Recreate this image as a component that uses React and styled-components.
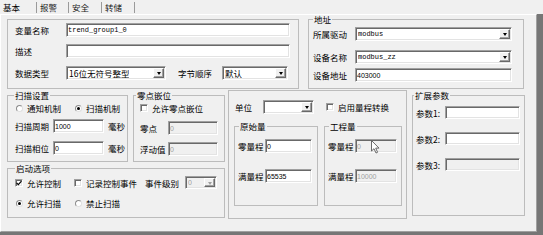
import styled, { createGlobalStyle } from "styled-components"

//Styles globaux
const GlobalStyle = createGlobalStyle`
  * {
    box-sizing: border-box;
  }
  html,
  body {
    margin: 0;
    padding: 0;
    background: #f0f0f0;
  }
  body {
    font-family: "Noto Sans CJK SC", "Liberation Sans", sans-serif;
    font-size: 8.5px;
    color: #000;
  }
`

const Window = styled.div`
  width: 543px;
  height: 235px;
  display: flex;
  flex-direction: column;
  background: #f0f0f0;
  overflow: hidden;
`

const TabBar = styled.div`
  display: flex;
  height: 14px;
  flex: none;
`

const Tab = styled.div`
  width: ${(p) => p.$w}px;
  height: 11px;
  margin-top: 2px;
  padding-left: 3px;
  border-right: 1px solid #9a9a9a;
  line-height: 11px;
  white-space: nowrap;
  color: ${(p) => (p.$active ? "#000" : "#1a1a1a")};
`

const Frame = styled.div`
  flex: 1;
  display: flex;
  border-right: 6px solid #767676;
  border-bottom: 3px solid #767676;
`

const Panel = styled.div`
  flex: 1;
  display: flex;
  flex-direction: column;
  border-top: 1px solid #fff;
  border-left: 1px solid #fff;
  border-right: 1px solid #a0a0a0;
  border-bottom: 1px solid #a0a0a0;
  padding-left: 6px;
`

const TopRow = styled.div`
  display: flex;
  align-items: flex-start;
`

const BottomRow = styled.div`
  display: flex;
  align-items: flex-start;
`

const LeftCol = styled.div`
  display: flex;
  flex-direction: column;
  margin-top: 2px;
`

const PairRow = styled.div`
  display: flex;
  gap: 5px;
`

const InnerRow = styled.div`
  display: flex;
  gap: 6px;
  margin-top: 8px;
`

const Group = styled.fieldset`
  flex: none;
  display: flex;
  flex-direction: column;
  min-width: 0;
  width: ${(p) => p.$w}px;
  height: ${(p) => p.$h}px;
  margin: ${(p) => p.$m || "0"};
  padding: ${(p) => p.$pad || "0"};
  border: 1px solid #bcbcbc;
`

const Legend = styled.legend`
  height: 8px;
  line-height: 8px;
  padding: 0 1px;
  margin-left: ${(p) => p.$ml || 0}px;
  white-space: nowrap;
`

const Row = styled.div`
  flex: none;
  display: flex;
  align-items: center;
  height: ${(p) => p.$h || 14}px;
  margin-top: ${(p) => p.$mt || 0}px;
`

const Label = styled.span`
  flex: none;
  width: ${(p) => (p.$w ? `${p.$w}px` : "auto")};
  margin-left: ${(p) => p.$ml || 0}px;
  line-height: 12px;
  white-space: nowrap;
`

const sunken = `
  border: 1px solid;
  border-color: #a0a0a0 #fff #fff #a0a0a0;
  box-shadow: inset 1px 1px 0 #696969, inset -1px -1px 0 #e3e3e3;
`

const TextBox = styled.input`
  flex: none;
  width: ${(p) => p.$w}px;
  height: ${(p) => p.$h || 14}px;
  margin: 0;
  padding: 0 1px;
  ${sunken}
  background: #fff;
  font-family: ${(p) =>
    p.$mono ? `"Liberation Mono", monospace` : `"Liberation Sans", sans-serif`};
  font-size: 7px;
  color: #000;
  outline: none;

  &:disabled {
    background: #f0f0f0;
    color: #a0a0a0;
  }
`

const ComboFrame = styled.div`
  flex: none;
  display: flex;
  align-items: center;
  justify-content: space-between;
  width: ${(p) => p.$w}px;
  height: ${(p) => p.$h}px;
  padding: 0 1px 0 2px;
  ${sunken}
  background: ${(p) => (p.$disabled ? "#f0f0f0" : "#fff")};
`

const ComboValue = styled.span`
  white-space: nowrap;
  overflow: hidden;
  line-height: 10px;
  color: ${(p) => (p.$disabled ? "#a0a0a0" : "#000")};
  font-family: ${(p) =>
    p.$mono
      ? `"Liberation Mono", monospace`
      : p.$cjk
      ? `"Noto Sans CJK SC", sans-serif`
      : `"Liberation Sans", sans-serif`};
  font-size: ${(p) => (p.$cjk ? "8.5px" : "7px")};
`

const DropButton = styled.span`
  flex: none;
  display: flex;
  align-items: center;
  justify-content: center;
  width: 11px;
  height: ${(p) => p.$h}px;
  background: #f0f0f0;
  border: 1px solid;
  border-color: #fff #696969 #696969 #fff;
  box-shadow: inset -1px -1px 0 #a0a0a0;

  &::after {
    content: "";
    margin-top: 1px;
    border-left: 2.5px solid transparent;
    border-right: 2.5px solid transparent;
    border-top: 3px solid ${(p) => (p.$disabled ? "#a0a0a0" : "#000")};
  }
`

const Option = styled.span`
  flex: none;
  display: flex;
  align-items: center;
  gap: 4px;
  width: ${(p) => (p.$w ? `${p.$w}px` : "auto")};
  margin-left: ${(p) => p.$ml || 0}px;
  line-height: 12px;
  white-space: nowrap;
`

const CheckBox = styled.span`
  flex: none;
  display: flex;
  align-items: center;
  justify-content: center;
  width: 8px;
  height: 8px;
  ${sunken}
  background: #fff;
`

const Radio = styled.span`
  flex: none;
  display: flex;
  align-items: center;
  justify-content: center;
  width: 7px;
  height: 7px;
  border-radius: 50%;
  border: 1px solid #8c8c8c;
  border-right-color: #e0e0e0;
  border-bottom-color: #e0e0e0;
  background: #fff;

  &::after {
    content: "";
    display: ${(p) => (p.$on ? "block" : "none")};
    width: 3px;
    height: 3px;
    border-radius: 50%;
    background: #000;
  }
`

const FieldWrap = styled.span`
  position: relative;
  display: flex;
`

const Pointer = styled.svg`
  position: absolute;
  left: 16px;
  top: 1px;
  pointer-events: none;
`

function Check({ on }) {
  return (
    <CheckBox>
      {on && (
        <svg width="6" height="6" viewBox="0 0 6 6">
          <path d="M0.6 2.8 L2.3 4.6 L5.5 1.1" fill="none" stroke="#000" strokeWidth="1.2" />
        </svg>
      )}
    </CheckBox>
  )
}

function ComboBox({ w, h = 14, value, mono, cjk, disabled }) {
  return (
    <ComboFrame $w={w} $h={h} $disabled={disabled}>
      <ComboValue $mono={mono} $cjk={cjk} $disabled={disabled}>
        {value}
      </ComboValue>
      <DropButton $h={h - 4} $disabled={disabled} />
    </ComboFrame>
  )
}

function App() {
  return (
    <>
      <GlobalStyle />
      <Window>
        <TabBar>
          <Tab $w={37} $active>
            基本
          </Tab>
          <Tab $w={32}>报警</Tab>
          <Tab $w={33}>安全</Tab>
          <Tab $w={33}>转储</Tab>
        </TabBar>
        <Frame>
          <Panel>
            {/* Variable et adresse */}
            <TopRow>
              <Group $w={292} $h={70} $m="4px 0 0" $pad="3px 7px 0">
                <Row>
                  <Label $w={51}>变量名称</Label>
                  <TextBox $w={224} $mono defaultValue="trend_group1_0" readOnly />
                </Row>
                <Row $mt={7}>
                  <Label $w={51}>描述</Label>
                  <TextBox $w={224} readOnly />
                </Row>
                <Row $mt={8}>
                  <Label $w={51}>数据类型</Label>
                  <ComboBox w={100} value="16位无符号整型" cjk />
                  <Label $w={44} $ml={12}>
                    字节顺序
                  </Label>
                  <ComboBox w={66} value="默认" cjk />
                </Row>
              </Group>
              <Group $w={216} $h={74} $m="0 0 0 9px" $pad="4px 4px 0">
                <Legend>地址</Legend>
                <Row>
                  <Label $w={42}>所属驱动</Label>
                  <ComboBox w={157} value="modbus" mono />
                </Row>
                <Row $mt={9}>
                  <Label $w={42}>设备名称</Label>
                  <ComboBox w={157} value="modbus_zz" mono />
                </Row>
                <Row $mt={4}>
                  <Label $w={42}>设备地址</Label>
                  <TextBox $w={157} defaultValue="403000" readOnly />
                </Row>
              </Group>
            </TopRow>

            <BottomRow>
              <LeftCol>
                <PairRow>
                  <Group $w={121} $h={71} $pad="3px 7px 0">
                    <Legend $ml={-1}>扫描设置</Legend>
                    <Row $h={12}>
                      <Option $w={59} $ml={1}>
                        <Radio />
                        通知机制
                      </Option>
                      <Option>
                        <Radio $on />
                        扫描机制
                      </Option>
                    </Row>
                    <Row $mt={5}>
                      <Label $w={38}>扫描周期</Label>
                      <TextBox $w={51} defaultValue="1000" readOnly />
                      <Label $ml={4}>毫秒</Label>
                    </Row>
                    <Row $mt={8}>
                      <Label $w={38}>扫描相位</Label>
                      <TextBox $w={51} defaultValue="0" readOnly />
                      <Label $ml={4}>毫秒</Label>
                    </Row>
                  </Group>
                  <Group $w={92} $h={71} $pad="3px 6px 0">
                    <Legend $ml={-4}>零点嵌位</Legend>
                    <Row $h={12}>
                      <Option>
                        <Check />
                        允许零点嵌位
                      </Option>
                    </Row>
                    <Row $mt={7}>
                      <Label $w={28}>零点</Label>
                      <TextBox $w={50} defaultValue="0" disabled />
                    </Row>
                    <Row $mt={7}>
                      <Label $w={28}>浮动值</Label>
                      <TextBox $w={50} defaultValue="0" disabled />
                    </Row>
                  </Group>
                </PairRow>
                <Group $w={218} $h={54} $m="2px 0 0" $pad="4px 7px 0">
                  <Legend>启动选项</Legend>
                  <Row $h={13}>
                    <Option $w={59}>
                      <Check on />
                      允许控制
                    </Option>
                    <Option $w={71}>
                      <Check />
                      记录控制事件
                    </Option>
                    <Label $w={40}>事件级别</Label>
                    <ComboBox w={32} h={13} value="0" disabled />
                  </Row>
                  <Row $h={12} $mt={8}>
                    <Option $w={59} $ml={1}>
                      <Radio $on />
                      允许扫描
                    </Option>
                    <Option>
                      <Radio />
                      禁止扫描
                    </Option>
                  </Row>
                </Group>
              </LeftCol>

              {/* Unités et plages */}
              <Group $w={179} $h={129} $m="1px 0 0 3px" $pad="9px 0 0 5px">
                <Row>
                  <Label $w={28} $ml={1}>
                    单位
                  </Label>
                  <ComboBox w={51} value="" />
                  <Option $ml={12}>
                    <Check />
                    启用量程转换
                  </Option>
                </Row>
                <InnerRow>
                  <Group $w={84} $h={84} $pad="9px 3px 0">
                    <Legend $ml={1}>原始量</Legend>
                    <Row>
                      <Label $w={27}>零量程</Label>
                      <TextBox $w={47} defaultValue="0" readOnly />
                    </Row>
                    <Row $mt={16}>
                      <Label $w={27}>满量程</Label>
                      <TextBox $w={47} defaultValue="65535" readOnly />
                    </Row>
                  </Group>
                  <Group $w={78} $h={84} $pad="9px 3px 0">
                    <Legend $ml={1}>工程量</Legend>
                    <Row>
                      <Label $w={27}>零量程</Label>
                      <FieldWrap>
                        <TextBox $w={42} defaultValue="0" disabled />
                        <Pointer width="9" height="14" viewBox="0 0 9 14">
                          <path
                            d="M0.5 0.5 V11 L3 8.7 L5 13 L6.6 12.3 L4.7 8.1 H8 Z"
                            fill="#fff"
                            stroke="#5a5a5a"
                            strokeWidth="0.9"
                            strokeLinejoin="round"
                          />
                        </Pointer>
                      </FieldWrap>
                    </Row>
                    <Row $mt={16}>
                      <Label $w={27}>满量程</Label>
                      <TextBox $w={42} defaultValue="10000" disabled />
                    </Row>
                  </Group>
                </InnerRow>
              </Group>

              {/* Paramètres étendus */}
              <Group $w={113} $h={125} $m="2px 0 0 5px" $pad="7px 3px 0">
                <Legend $ml={-2}>扩展参数</Legend>
                <Row $h={13}>
                  <Label $w={29}>参数1:</Label>
                  <TextBox $w={75} $h={13} readOnly />
                </Row>
                <Row $h={13} $mt={13}>
                  <Label $w={29}>参数2:</Label>
                  <TextBox $w={75} $h={13} readOnly />
                </Row>
                <Row $h={13} $mt={13}>
                  <Label $w={29}>参数3:</Label>
                  <TextBox $w={75} $h={13} disabled />
                </Row>
              </Group>
            </BottomRow>
          </Panel>
        </Frame>
      </Window>
    </>
  )
}

export default App
